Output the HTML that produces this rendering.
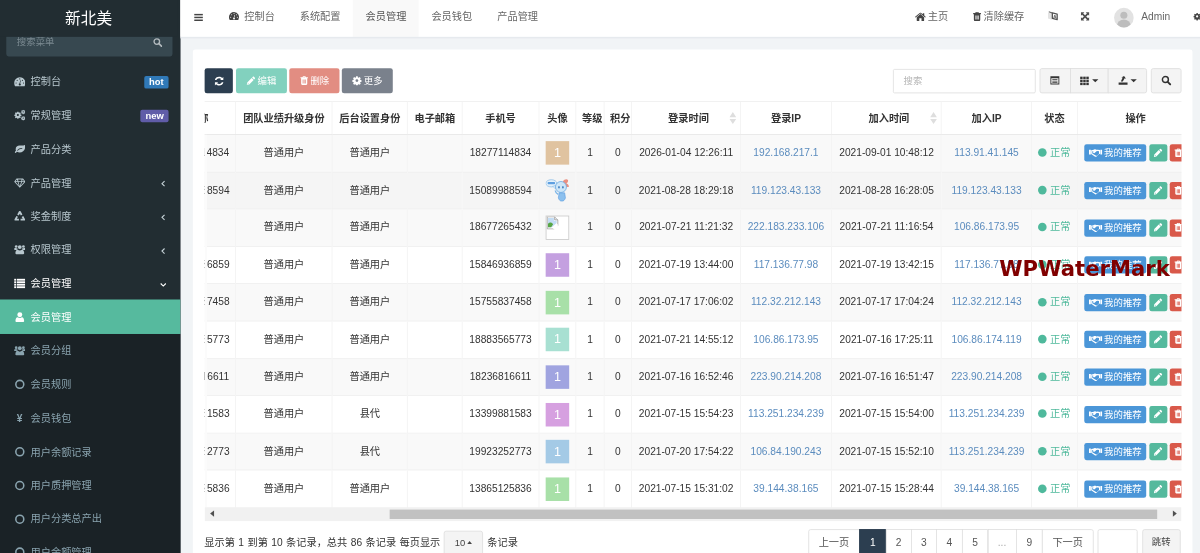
<!DOCTYPE html><html lang="zh-CN"><head><meta charset="utf-8"><title>新北美</title><style>
*{box-sizing:border-box}
html,body{margin:0;padding:0}
body{width:1200px;height:553px;overflow:hidden;background:#f1f4f6;font-family:"Liberation Sans","Noto Sans CJK SC",sans-serif;font-size:13px;color:#333;line-height:1.42857}
#app{position:absolute;left:0;top:0;width:1540px;height:710px;transform:scale(0.784);transform-origin:0 0;overflow:hidden;background:#f1f4f6}
#bw{position:absolute;left:-30px;top:-30px;width:1600px;height:780px;filter:blur(.45px);background:#f1f4f6}
#in{position:absolute;left:30px;top:30px;width:1540px;height:740px}
.fill{position:absolute}
.ic{fill:currentColor;display:inline-block;vertical-align:middle}
.abs{position:absolute}
/* sidebar */
#side{position:absolute;left:0;top:0;width:230.300px;height:710px;background:#222d32;color:#b8c7ce}
#logo{position:absolute;left:0;top:0;width:226px;height:46.5px;background:#222d32;color:#fff;font-size:20px;text-align:center;line-height:46px;z-index:3}
#sform{position:absolute;left:8px;top:36px;width:212px;height:36px;background:#374850;border-radius:3px;z-index:1}
#sform span{position:absolute;left:13.5px;top:9px;font-size:12px;color:#7b8a91;line-height:17px}
#sform .ic{position:absolute;left:186.5px;top:11.5px;color:#b2b9bd}
.mi{position:absolute;left:0;width:230.300px;height:43.100px;line-height:42.89px;font-size:13px;color:#b8c7ce;white-space:nowrap}
.mi .ico{position:absolute;left:15px;top:.800px;width:20px;height:42.85px;text-align:center;color:inherit}
.mi .ico .ic{position:relative;top:-1px}
.mi .tx{position:absolute;left:39px;top:1px}
.mi .arr{position:absolute;left:202.500px;top:1.500px;color:#c5d1d6}
.mi.open{color:#fff}
.mi.sub{color:#8aa4af}
.mi.act{color:#fff}
#actbg{position:absolute;left:-30px;top:382.200px;width:260.300px;height:43.600px;background:#56ba9e}
#subbg{position:absolute;left:-30px;top:425.500px;width:260.300px;height:300px;background:#1a2226}
.lbl{position:absolute;top:14px;height:16.600px;line-height:16.600px;font-size:12px;font-weight:bold;color:#fff;border-radius:2.500px;text-align:center;font-family:"Liberation Sans",sans-serif}
/* header */
#hdr{position:absolute;left:230px;top:0;width:1310px;height:46.700px;background:#fff}
#hdrline{position:absolute;left:230px;top:46.700px;width:1310px;height:2.600px;background:#e6eaee}
.tab{position:absolute;top:0;height:46.700px;line-height:42px;font-size:13px;color:#666;white-space:nowrap}
.tab.on{background:#f9f9f9;color:#555}
.nv{position:absolute;top:0;height:46.700px;line-height:43px;font-size:13px;color:#666;white-space:nowrap}
/* panel */
#panel{position:absolute;left:245.700px;top:62.500px;width:1275.600px;height:660px;background:#fff;border-radius:3px}
.btn{position:absolute;top:87.300px;height:31.800px;border-radius:3px;color:#fff;font-size:12px;line-height:33.600px;text-align:center;white-space:nowrap}
.btn .ic{position:relative;top:-1px}
.gbtn{position:absolute;top:87.200px;height:32px;background:#f4f4f4;border:1px solid #ddd;color:#333;text-align:center;line-height:28px}
/* table */
#twrap{position:absolute;left:260.600px;top:129px;width:1246.200px;height:535.500px;overflow:hidden}
#tbl{position:absolute;left:-58.800px;top:0;border-collapse:collapse;table-layout:fixed;font-size:13px;color:#333}
#tbl th,#tbl td{border-left:1px solid #f1f1f1;border-right:1px solid #f1f1f1;border-top:1px solid #ededed;padding:0;text-align:center;vertical-align:middle;white-space:nowrap;overflow:hidden}
#tbl th{height:42px;padding-top:3px;font-weight:bold;color:#333;border-bottom:1px solid #e4e4e4;border-top:1px solid #e8e8e8;position:relative}
#tbl td{height:47.620px}
#tbl tr.o td{background:#f9f9f9}
#tbl tr.h td{background:#f5f5f5}
#tbl a{color:#5b8cbe;text-decoration:none}
.av{display:inline-block;width:30px;height:30px;line-height:30px;color:#fff;font-size:16px;vertical-align:middle;text-align:center}
.st{color:#4fb99c}
.st i{display:inline-block;width:11px;height:11px;border-radius:50%;background:#4fb99c;vertical-align:middle;margin-right:4px;position:relative;top:-1px}
.xb{display:inline-block;height:22px;line-height:23.400px;border-radius:3px;color:#fff;font-size:12px;vertical-align:middle;text-align:center}
.xb .ic{position:relative;top:-1px}
.srt{position:absolute;right:4.800px;top:11px;color:#dedede}
/* scroll */
#sb{position:absolute;left:0;top:518px;width:1246.200px;height:17.500px;background:#f1f1f1}
#sb .th{position:absolute;left:236.100px;top:2.800px;width:979.400px;height:12px;background:#c1c1c1}
/* pagination */
.pg{position:absolute;top:674.700px;height:34px;border:1px solid #ddd;background:#fff;color:#555;font-size:13px;line-height:31px;text-align:center;margin-left:-1px}
.pg.on{background:#2c3e50;border-color:#2c3e50;color:#fff}
#info{position:absolute;left:260.600px;top:677.200px;font-size:13px;color:#333;line-height:29px;white-space:nowrap;word-spacing:.8px}
</style></head><body><div id="app"><div id="bw"><div class="fill" style="left:0;top:0;width:260.300px;height:780px;background:#222d32"></div><div class="fill" style="left:260.300px;top:0;width:1340px;height:76.700px;background:#fff"></div><div id="in">
<div id="side">
<div id="logo">新北美</div>
<div id="sform"><span>搜索菜单</span><svg class="ic" width="12" height="12" viewBox="0 0 16 16" style=""><circle cx="6.700" cy="6.700" r="4.700" fill="none" stroke="currentColor" stroke-width="2.300"/><path d="M10.300 10.300l4.200 4.200" stroke="currentColor" stroke-width="2.800" stroke-linecap="round"/></svg></div>
<div id="subbg"></div><div id="actbg"></div>
<div class="mi " style="top:82.90px"><span class="ico"><svg class="ic" width="14.5" height="14.5" viewBox="0 0 16 16" style=""><path fill-rule="evenodd" d="M8 1.800a8 8 0 0 0-8 8c0 1.600.500 3.100 1.300 4.400h13.400A8 8 0 0 0 8 1.800zM8 3.200a.800.800 0 1 1 0 1.600.800.800 0 0 1 0-1.600zM2.800 10.600a.800.800 0 1 1 0-1.600.800.800 0 0 1 0 1.600zM4.300 6.800a.800.800 0 1 1 0-1.600.800.800 0 0 1 0 1.600zM9.500 11.800a1.500 1.500 0 1 1-1.900-1.450l1.100-4.300.800.200-1.100 4.300c.600.200 1.100.700 1.100 1.250zM11.700 6.800a.800.800 0 1 1 0-1.600.800.800 0 0 1 0 1.600zM13.200 10.600a.800.800 0 1 1 0-1.600.800.800 0 0 1 0 1.600z"/></svg></span><span class="tx">控制台</span><span class="lbl" style="left:183.800px;width:31.200px;background:#3079b8">hot</span></div>
<div class="mi " style="top:125.79px"><span class="ico"><svg class="ic" width="14.5" height="14.5" viewBox="0 0 16 16" style=""><g transform="translate(0,2.500) scale(.66)"><path fill-rule="evenodd" d="M6.700 1h2.600l.4 1.900 1.200.5 1.600-1.100 1.800 1.800-1.100 1.600.5 1.200 1.900.4v2.600l-1.900.4-.5 1.200 1.100 1.600-1.800 1.800-1.600-1.100-1.200.5-.4 1.900H6.700l-.4-1.900-1.200-.5-1.600 1.100-1.800-1.800 1.100-1.600-.5-1.200L.4 9.900V7.300l1.900-.4.5-1.200-1.100-1.600 1.800-1.800 1.600 1.100 1.200-.5zM8 5.700a2.300 2.300 0 1 0 0 4.600 2.300 2.300 0 0 0 0-4.600z" transform="translate(0,-.6)"/></g><g transform="translate(9.600,0) scale(.4)"><path fill-rule="evenodd" d="M6.700 1h2.600l.4 1.900 1.200.5 1.600-1.100 1.800 1.800-1.100 1.600.5 1.200 1.900.4v2.600l-1.900.4-.5 1.200 1.100 1.600-1.800 1.800-1.600-1.100-1.200.5-.4 1.900H6.700l-.4-1.900-1.200-.5-1.600 1.100-1.800-1.800 1.100-1.600-.5-1.200L.4 9.900V7.300l1.900-.4.5-1.200-1.100-1.600 1.800-1.800 1.600 1.100 1.200-.5zM8 5.700a2.300 2.300 0 1 0 0 4.600 2.300 2.300 0 0 0 0-4.600z" transform="translate(0,-.6)"/></g><g transform="translate(9.600,8.800) scale(.4)"><path fill-rule="evenodd" d="M6.700 1h2.600l.4 1.900 1.200.5 1.600-1.100 1.800 1.800-1.100 1.600.5 1.200 1.900.4v2.600l-1.900.4-.5 1.200 1.100 1.600-1.800 1.800-1.600-1.100-1.200.5-.4 1.900H6.700l-.4-1.900-1.200-.5-1.600 1.100-1.800-1.800 1.100-1.600-.5-1.200L.4 9.900V7.300l1.900-.4.5-1.200-1.100-1.600 1.800-1.800 1.600 1.100 1.200-.5zM8 5.700a2.300 2.300 0 1 0 0 4.600 2.300 2.300 0 0 0 0-4.600z" transform="translate(0,-.6)"/></g></svg></span><span class="tx">常规管理</span><span class="lbl" style="left:179.300px;width:35.700px;background:#605ca8">new</span></div>
<div class="mi " style="top:168.68px"><span class="ico"><svg class="ic" width="14.5" height="14.5" viewBox="0 0 16 16" style=""><path d="M15.300 2.200c.5 1.300.5 3 .1 4.600-.9 3.500-3.800 6-7.600 6-1.400 0-2.700-.4-3.700-1-.7.600-1.300 1.500-2 1.500-.6 0-1.100-.6-1.100-1.100 0-.8 1-1.400 1.600-2.100-.3-.7-.4-1.400-.4-2.100 0-3 2.400-4.800 5.400-5 2.200-.2 5.500.3 7.700-.8zM11 6.300c-2.800 0-4.900 1.200-6.600 3.200-.3.400.4 1 .8.600C6.800 8.400 8.600 7.400 11 7.400c.700 0 .700-1.100 0-1.100z"/></svg></span><span class="tx">产品分类</span></div>
<div class="mi " style="top:211.57px"><span class="ico"><svg class="ic" width="14.5" height="14.5" viewBox="0 0 16 16" style=""><path fill-rule="evenodd" d="M3.400 2h9.200L16 6.400 8 15 0 6.400zM3.900 3.200 2 5.700h2.800zm1.700 0L6 5.700h4l.4-2.500zm6.500 0-.9 2.500H14zM2.100 6.900l4.700 5.200L4.900 6.900zm4.100 0L8 12.600l1.800-5.700zm4.900 0L9.200 12.100l4.700-5.200z"/></svg></span><span class="tx">产品管理</span><span class="arr"><svg class="ic" width="10.5" height="10.5" viewBox="0 0 16 16" style=""><path d="M10.500 3 5.500 8l5 5" fill="none" stroke="currentColor" stroke-width="2.200"/></svg></span></div>
<div class="mi " style="top:254.46px"><span class="ico"><svg class="ic" width="14.5" height="14.5" viewBox="0 0 16 16" style=""><path d="M8 1.300 14.300 12.300H1.700z" fill="none" stroke="currentColor" stroke-width="2.600" stroke-linejoin="round" stroke-dasharray="10.400 2.300" stroke-dashoffset="5.200"/></svg></span><span class="tx">奖金制度</span><span class="arr"><svg class="ic" width="10.5" height="10.5" viewBox="0 0 16 16" style=""><path d="M10.500 3 5.500 8l5 5" fill="none" stroke="currentColor" stroke-width="2.200"/></svg></span></div>
<div class="mi " style="top:297.35px"><span class="ico"><svg class="ic" width="14.5" height="14.5" viewBox="0 0 16 16" style=""><circle cx="8" cy="4.600" r="2.700"/><path d="M3 14.500c-.8 0-1.200-.5-1.200-1.200 0-2.600 1-5 3.300-5 .8.700 1.800 1.100 2.900 1.100s2.100-.4 2.900-1.100c2.300 0 3.300 2.400 3.300 5 0 .7-.4 1.200-1.200 1.200z"/><circle cx="2.900" cy="3.800" r="1.900"/><circle cx="13.100" cy="3.800" r="1.900"/><path d="M.9 8.600C.3 8.600 0 8.200 0 7.700c0-1 .4-2.100 1.400-2.100.4.400 1 .6 1.500.6.500 0 1-.1 1.400-.4.100.8.400 1.500.9 2.100-.9 0-1.600.3-2.100.7zM15.100 8.600c.6 0 .9-.4.900-.9 0-1-.4-2.100-1.400-2.100-.4.400-1 .6-1.500.6-.5 0-1-.1-1.400-.4-.1.800-.4 1.500-.9 2.100.9 0 1.600.3 2.100.7z"/></svg></span><span class="tx">权限管理</span><span class="arr"><svg class="ic" width="10.5" height="10.5" viewBox="0 0 16 16" style=""><path d="M10.500 3 5.500 8l5 5" fill="none" stroke="currentColor" stroke-width="2.200"/></svg></span></div>
<div class="mi open" style="top:340.24px"><span class="ico"><svg class="ic" width="14.5" height="14.5" viewBox="0 0 16 16" style=""><rect x="0" y="1.800" width="3" height="2.600"/><rect x="4" y="1.800" width="12" height="2.600"/><rect x="0" y="5.300" width="3" height="2.600"/><rect x="4" y="5.300" width="12" height="2.600"/><rect x="0" y="8.800" width="3" height="2.600"/><rect x="4" y="8.800" width="12" height="2.600"/><rect x="0" y="12.300" width="3" height="2.600"/><rect x="4" y="12.300" width="12" height="2.600"/></svg></span><span class="tx">会员管理</span><span class="arr" style="color:#fff"><svg class="ic" width="10.5" height="10.5" viewBox="0 0 16 16" style=""><path d="M3 5.500l5 5 5-5" fill="none" stroke="currentColor" stroke-width="2.200"/></svg></span></div>
<div class="mi act sub" style="top:383.13px"><span class="ico"><svg class="ic" width="14.5" height="14.5" viewBox="0 0 16 16" style=""><circle cx="8" cy="4.800" r="3.500"/><path d="M3.600 15.200c-1 0-1.700-.6-1.700-1.600 0-2.600.8-5.300 3.200-5.300.8.700 1.800 1.200 2.900 1.200s2.100-.5 2.900-1.200c2.400 0 3.200 2.700 3.200 5.300 0 1-.7 1.600-1.700 1.600z"/></svg></span><span class="tx">会员管理</span></div>
<div class="mi sub" style="top:426.02px"><span class="ico"><svg class="ic" width="14.5" height="14.5" viewBox="0 0 16 16" style=""><circle cx="8" cy="4.600" r="2.700"/><path d="M3 14.500c-.8 0-1.200-.5-1.200-1.200 0-2.600 1-5 3.300-5 .8.700 1.800 1.100 2.900 1.100s2.100-.4 2.900-1.100c2.300 0 3.300 2.400 3.300 5 0 .7-.4 1.200-1.200 1.200z"/><circle cx="2.900" cy="3.800" r="1.900"/><circle cx="13.100" cy="3.800" r="1.900"/><path d="M.9 8.600C.3 8.600 0 8.200 0 7.700c0-1 .4-2.100 1.400-2.100.4.400 1 .6 1.500.6.500 0 1-.1 1.400-.4.100.8.400 1.500.9 2.100-.9 0-1.600.3-2.100.7zM15.100 8.600c.6 0 .9-.4.900-.9 0-1-.4-2.100-1.400-2.100-.4.400-1 .6-1.500.6-.5 0-1-.1-1.400-.4-.1.800-.4 1.500-.9 2.100.9 0 1.600.3 2.100.7z"/></svg></span><span class="tx">会员分组</span></div>
<div class="mi sub" style="top:468.91px"><span class="ico"><svg class="ic" width="14.5" height="14.5" viewBox="0 0 16 16" style=""><circle cx="8" cy="8" r="5.600" fill="none" stroke="currentColor" stroke-width="2.200"/></svg></span><span class="tx">会员规则</span></div>
<div class="mi sub" style="top:511.80px"><span class="ico"><span style="font-size:13px;font-weight:bold">¥</span></span><span class="tx">会员钱包</span></div>
<div class="mi sub" style="top:554.69px"><span class="ico"><svg class="ic" width="14.5" height="14.5" viewBox="0 0 16 16" style=""><circle cx="8" cy="8" r="5.600" fill="none" stroke="currentColor" stroke-width="2.200"/></svg></span><span class="tx">用户余额记录</span></div>
<div class="mi sub" style="top:597.58px"><span class="ico"><svg class="ic" width="14.5" height="14.5" viewBox="0 0 16 16" style=""><circle cx="8" cy="8" r="5.600" fill="none" stroke="currentColor" stroke-width="2.200"/></svg></span><span class="tx">用户质押管理</span></div>
<div class="mi sub" style="top:640.47px"><span class="ico"><svg class="ic" width="14.5" height="14.5" viewBox="0 0 16 16" style=""><circle cx="8" cy="8" r="5.600" fill="none" stroke="currentColor" stroke-width="2.200"/></svg></span><span class="tx">用户分类总产出</span></div>
<div class="mi sub" style="top:683.36px"><span class="ico"><svg class="ic" width="14.5" height="14.5" viewBox="0 0 16 16" style=""><circle cx="8" cy="8" r="5.600" fill="none" stroke="currentColor" stroke-width="2.200"/></svg></span><span class="tx">用户余额管理</span></div>
</div>
<div id="hdr">
<span class="nv" style="left:16.600px;color:#444"><svg class="ic" width="12.5" height="12.5" viewBox="0 0 16 16" style=""><rect x="1" y="2.2" width="14" height="2.4"/><rect x="1" y="6.8" width="14" height="2.4"/><rect x="1" y="11.4" width="14" height="2.4"/></svg></span>
<div class="tab" style="left:46.1px;width:90.2px;padding-left:16px"><svg class="ic" width="13" height="13" viewBox="0 0 16 16" style="position:relative;top:-1px;margin-right:6.500px;color:#444"><path fill-rule="evenodd" d="M8 1.800a8 8 0 0 0-8 8c0 1.600.500 3.100 1.300 4.400h13.400A8 8 0 0 0 8 1.800zM8 3.200a.800.800 0 1 1 0 1.600.800.800 0 0 1 0-1.600zM2.800 10.600a.800.800 0 1 1 0-1.600.800.800 0 0 1 0 1.600zM4.300 6.800a.800.800 0 1 1 0-1.600.800.800 0 0 1 0 1.600zM9.500 11.800a1.500 1.500 0 1 1-1.900-1.450l1.100-4.300.800.200-1.100 4.300c.600.200 1.100.700 1.100 1.250zM11.700 6.800a.800.800 0 1 1 0-1.600.800.800 0 0 1 0 1.600zM13.200 10.600a.800.800 0 1 1 0-1.600.800.800 0 0 1 0 1.600z"/></svg>控制台</div>
<div class="tab" style="left:136.3px;width:84.0px;padding-left:16px">系统配置</div>
<div class="tab on" style="left:220.3px;width:84.0px;padding-left:16px">会员管理</div>
<div class="tab" style="left:304.3px;width:84.0px;padding-left:16px">会员钱包</div>
<div class="tab" style="left:388.3px;width:84.0px;padding-left:16px">产品管理</div>
<span class="nv" style="left:936.5px"><svg class="ic" width="14" height="14" viewBox="0 0 16 16" style="position:relative;top:-1px;margin-right:3px;color:#444"><path d="M8 3.400 2.600 7.900v4.900c0 .3.200.5.500.5h3.300V9.600h3.200v3.700h3.300c.3 0 .5-.2.500-.5V7.900z"/><path d="M15.700 7.300 13.600 5.500V2.300c0-.2-.1-.3-.3-.3h-1.500c-.2 0-.3.100-.3.300v1.500L9 1.700c-.6-.5-1.400-.5-2 0L.3 7.300c-.1.100-.2.300 0 .4l.5.600c.1.100.3.100.4 0L8 2.700l6.800 5.600c.1.100.3.100.4 0l.5-.6c.2-.1.100-.3 0-.4z"/></svg>主页</span>
<span class="nv" style="left:1009.5px"><svg class="ic" width="12.5" height="12.5" viewBox="0 0 16 16" style="position:relative;top:-1px;margin-right:2.500px;color:#444"><path d="M5.500 1.200c.2-.5.500-.7 1-.7h3c.5 0 .8.200 1 .7l.4 1h3c.3 0 .5.200.5.500v.7c0 .3-.2.500-.5.500h-.7v9.300c0 1.200-.7 2-1.700 2H4.500c-1 0-1.700-.8-1.700-2V3.900h-.7c-.3 0-.5-.2-.5-.5v-.7c0-.3.200-.5.500-.5h3zM6.700 1.700l-.3.500h3.200l-.3-.5zM5.400 6v6.500h1.200V6zm2 0v6.500h1.200V6zm2 0v6.500h1.200V6z" fill-rule="evenodd"/></svg>清除缓存</span>
<span class="nv" style="left:1106.0px;color:#999"><svg class="ic" width="14" height="14" viewBox="0 0 16 16" style="position:relative;top:-2.200px"><path d="M.800 4.200 6.800 2.200v11.600L.800 12z" fill="#e3e3e3"/><path d="M2 2.300l5.200 1.700" stroke="#666" stroke-width="1.500" fill="none"/><path d="M7.200 4 14.200 5.600v8.200L7.200 11.800z" fill="#fff" stroke="#555" stroke-width="1.900" stroke-linejoin="round"/><path d="M9.200 11.300l1.600-4.300 1.700 4.800M9.800 9.900l2.300.500" stroke="#555" fill="none" stroke-width="1.100"/></svg></span>
<span class="nv" style="left:1148.0px;color:#505050"><svg class="ic" width="12" height="12" viewBox="0 0 16 16" style="position:relative;top:-1.800px"><path d="M1 1h5.800L4.900 2.900 8 6l3.100-3.100L9.200 1H15v5.800l-1.900-1.900L10 8l3.100 3.100L15 9.200V15H9.200l1.900-1.900L8 10l-3.100 3.100L6.800 15H1V9.200l1.900 1.900L6 8 2.900 4.900 1 6.800z"/></svg></span>
<span class="abs" style="left:1190.7px;top:9.500px;width:25.500px;height:25.500px;border-radius:50%;background:#e2e2e2;overflow:hidden"><i class="abs" style="left:8.200px;top:5px;width:9px;height:9px;border-radius:50%;background:#bdbdbd"></i><i class="abs" style="left:4.200px;top:15.500px;width:17px;height:14px;border-radius:50%;background:#bdbdbd"></i></span>
<span class="nv" style="left:1225.7px">Admin</span>
<span class="nv" style="left:1291.5px;color:#444"><svg class="ic" width="15" height="15" viewBox="0 0 16 16" style="position:relative;top:-1px"><g transform="translate(0,2.500) scale(.66)"><path fill-rule="evenodd" d="M6.700 1h2.600l.4 1.900 1.200.5 1.600-1.100 1.800 1.800-1.100 1.600.5 1.200 1.900.4v2.600l-1.900.4-.5 1.200 1.100 1.600-1.800 1.800-1.600-1.100-1.200.5-.4 1.900H6.700l-.4-1.900-1.200-.5-1.600 1.100-1.800-1.800 1.100-1.600-.5-1.200L.4 9.900V7.300l1.900-.4.5-1.200-1.100-1.600 1.800-1.800 1.600 1.100 1.200-.5zM8 5.700a2.300 2.300 0 1 0 0 4.600 2.300 2.300 0 0 0 0-4.600z" transform="translate(0,-.6)"/></g><g transform="translate(9.600,0) scale(.4)"><path fill-rule="evenodd" d="M6.700 1h2.600l.4 1.900 1.200.5 1.600-1.100 1.800 1.800-1.100 1.600.5 1.200 1.900.4v2.600l-1.900.4-.5 1.200 1.100 1.600-1.800 1.800-1.600-1.100-1.200.5-.4 1.900H6.700l-.4-1.900-1.200-.5-1.600 1.100-1.800-1.800 1.100-1.600-.5-1.200L.4 9.900V7.300l1.900-.4.5-1.200-1.100-1.600 1.800-1.800 1.600 1.100 1.200-.5zM8 5.700a2.300 2.300 0 1 0 0 4.600 2.300 2.300 0 0 0 0-4.600z" transform="translate(0,-.6)"/></g><g transform="translate(9.600,8.800) scale(.4)"><path fill-rule="evenodd" d="M6.700 1h2.600l.4 1.900 1.200.5 1.600-1.100 1.800 1.800-1.100 1.600.5 1.200 1.900.4v2.600l-1.900.4-.5 1.200 1.100 1.600-1.800 1.800-1.600-1.100-1.200.5-.4 1.900H6.700l-.4-1.900-1.200-.5-1.600 1.100-1.800-1.800 1.100-1.600-.5-1.200L.4 9.900V7.300l1.900-.4.5-1.200-1.100-1.600 1.800-1.800 1.600 1.100 1.200-.5zM8 5.700a2.300 2.300 0 1 0 0 4.600 2.300 2.300 0 0 0 0-4.600z" transform="translate(0,-.6)"/></g></svg></span>
</div><div id="hdrline"></div>
<div id="panel"></div>
<div class="btn" style="left:261.200px;width:36px;background:#2c3e50"><svg class="ic" width="13" height="13" viewBox="0 0 16 16" style=""><path d="M14.600 1.300v4.600c0 .3-.2.500-.5.500H9.500l1.700-1.700A4.500 4.500 0 0 0 8 3.400c-1.900 0-3.500 1.100-4.200 2.800H1.300A6.900 6.900 0 0 1 8 1c1.900 0 3.600.8 4.900 2zM1.400 14.700v-4.600c0-.3.200-.5.500-.5h4.600l-1.700 1.700c.8.800 2 1.300 3.200 1.300 1.900 0 3.500-1.100 4.200-2.800h2.500A6.900 6.900 0 0 1 8 15c-1.900 0-3.600-.8-4.900-2z"/></svg></div>
<div class="btn" style="left:301px;width:64.600px;background:#82d1be"><svg class="ic" width="12" height="12" viewBox="0 0 16 16" style="margin-right:2.500px"><path d="M11.400 1.200c.5-.5 1.200-.5 1.700 0l1.700 1.700c.5.500.5 1.200 0 1.700l-1.300 1.300-3.400-3.400zM9.300 3.300l3.400 3.400-7.500 7.500-4.200.8.800-4.200zM3 11.500l-.3 1.800 1.800-.3z"/></svg>编辑</div>
<div class="btn" style="left:369px;width:63.800px;background:#e28d82"><svg class="ic" width="12" height="12" viewBox="0 0 16 16" style="margin-right:2px"><path d="M5.500 1.200c.2-.5.500-.7 1-.7h3c.5 0 .8.200 1 .7l.4 1h3c.3 0 .5.200.5.500v.7c0 .3-.2.500-.5.500h-.7v9.300c0 1.200-.7 2-1.700 2H4.500c-1 0-1.700-.8-1.700-2V3.900h-.7c-.3 0-.5-.2-.5-.5v-.7c0-.3.200-.5.500-.5h3zM6.700 1.700l-.3.500h3.200l-.3-.5zM5.400 6v6.500h1.200V6zm2 0v6.500h1.200V6zm2 0v6.500h1.200V6z" fill-rule="evenodd"/></svg>删除</div>
<div class="btn" style="left:436.200px;width:64.800px;background:#7a818c"><svg class="ic" width="12.5" height="12.5" viewBox="0 0 16 16" style="margin-right:2.500px"><path fill-rule="evenodd" d="M6.700 1h2.600l.4 1.900 1.200.5 1.600-1.100 1.800 1.800-1.100 1.600.5 1.200 1.900.4v2.600l-1.900.4-.5 1.200 1.100 1.600-1.800 1.800-1.600-1.100-1.200.5-.4 1.900H6.700l-.4-1.900-1.200-.5-1.600 1.100-1.800-1.800 1.100-1.600-.5-1.200L.4 9.900V7.300l1.900-.4.5-1.200-1.100-1.600 1.800-1.800 1.600 1.100 1.200-.5zM8 5.700a2.300 2.300 0 1 0 0 4.600 2.300 2.300 0 0 0 0-4.600z" transform="translate(0,-.6)"/></svg>更多</div>
<div class="abs" style="left:1139.400px;top:87.500px;width:181.400px;height:31.500px;border:1px solid #ddd;border-radius:2px;background:#fff;font-size:12px;color:#b5b5b5;line-height:29px;padding-left:12px">搜索</div>
<div class="gbtn" style="left:1325.900px;width:39.800px;border-radius:3px 0 0 3px"><svg class="ic" width="13" height="13" viewBox="0 0 16 16" style=""><path fill-rule="evenodd" d="M1 1.500h14v13H1zM2.400 4.800v8.300h11.200V4.800zM4 6.200h8v1.200H4zm0 2.300h8v1.200H4zm0 2.300h8V12H4z"/></svg></div>
<div class="gbtn" style="left:1364.700px;width:49.600px;"><svg class="ic" width="12.5" height="12.5" viewBox="0 0 16 16" style=""><rect x="1" y="1" width="4" height="4"/><rect x="6" y="1" width="4" height="4"/><rect x="11" y="1" width="4" height="4"/><rect x="1" y="6" width="4" height="4"/><rect x="6" y="6" width="4" height="4"/><rect x="11" y="6" width="4" height="4"/><rect x="1" y="11" width="4" height="4"/><rect x="6" y="11" width="4" height="4"/><rect x="11" y="11" width="4" height="4"/></svg><span style="display:inline-block;border:4px solid transparent;border-top:4.500px solid #333;border-bottom:0;margin-left:3.500px;vertical-align:middle"></span></div>
<div class="gbtn" style="left:1413.300px;width:49.300px;border-radius:0 3px 3px 0"><svg class="ic" width="13" height="13" viewBox="0 0 16 16" style=""><path d="M1 11.500h14V15H1zM4.500 9.800l2.900-6.100H5.200L9.500 1l3.200 4.500-2.200-.9-3 5.200z"/></svg><span style="display:inline-block;border:4px solid transparent;border-top:4.500px solid #333;border-bottom:0;margin-left:3.500px;vertical-align:middle"></span></div>
<div class="gbtn" style="left:1468.400px;width:38.400px;border-radius:3px"><svg class="ic" width="13" height="13" viewBox="0 0 16 16" style=""><circle cx="6.700" cy="6.700" r="4.700" fill="none" stroke="currentColor" stroke-width="2.300"/><path d="M10.300 10.300l4.200 4.200" stroke="currentColor" stroke-width="2.800" stroke-linecap="round"/></svg></div>
<div id="twrap"><table id="tbl" style="width:1320.4px"><colgroup>
<col style="width:98.5px">
<col style="width:122.7px">
<col style="width:96.5px">
<col style="width:69.3px">
<col style="width:98.2px">
<col style="width:47.3px">
<col style="width:35.5px">
<col style="width:35.7px">
<col style="width:138.4px">
<col style="width:116.3px">
<col style="width:140.3px">
<col style="width:114.9px">
<col style="width:58.6px">
<col style="width:148.2px">
</colgroup><thead><tr>
<th style="padding-left:2.500px">昵称</th>
<th>团队业绩升级身份</th>
<th>后台设置身份</th>
<th>电子邮箱</th>
<th>手机号</th>
<th>头像</th>
<th style="padding-left:6px">等级</th>
<th style="padding-left:6px">积分</th>
<th style="padding-left:6px">登录时间<span class="srt"><svg class="ic" width="9.5" height="17.1" viewBox="0 0 10 18" style=""><path d="M5 1l4.500 6.800h-9zM5 17l4.500-6.800h-9z"/></svg></span></th>
<th>登录IP</th>
<th style="padding-left:6px">加入时间<span class="srt"><svg class="ic" width="9.5" height="17.1" viewBox="0 0 10 18" style=""><path d="M5 1l4.500 6.800h-9zM5 17l4.500-6.800h-9z"/></svg></span></th>
<th>加入IP</th>
<th>状态</th>
<th>操作</th>
</tr></thead><tbody>
<tr class="o"><td style="padding-left:3px">18277114834</td><td>普通用户</td><td>普通用户</td><td></td><td>18277114834</td><td><span class="av" style="background:#e0c3a0">1</span></td><td>1</td><td>0</td><td>2026-01-04 12:26:11</td><td><a>192.168.217.1</a></td><td>2021-09-01 10:48:12</td><td><a>113.91.41.145</a></td><td style="padding-right:.800px"><span class="st"><i></i>正常</span></td><td style="text-align:left;padding-left:8px"><span class="xb" style="width:79.200px;background:#4b96d8"><svg class="ic" width="17" height="13.6" viewBox="0 0 20 16" style="margin-right:2.500px"><path fill-rule="evenodd" d="M0 3.500h2.800v7H0zM17.200 3.500H20v7h-2.800zM3.300 4.200l2.600-.1 2-.9c.700-.3 1.500-.3 2.200 0l.9.400 2-.2 3.700.700v5.600l-1.500.3-3.800 3.600c-.800.700-1.900.700-2.700 0L3.300 9.900zM5 5.700v3.500l5.700 3.300c.400.300.900.300 1.300 0l3-3 .100-3.600-2.200-.4-1.700.2-2.300 2.400c-.700.700-1.800.700-2.400 0-.600-.600-.600-1.500 0-2.100l.300-.300z"/></svg>我的推荐</span><span class="xb" style="width:22.500px;background:#55b99d;margin-left:4px"><svg class="ic" width="12" height="12" viewBox="0 0 16 16" style=""><path d="M11.400 1.200c.5-.5 1.200-.5 1.700 0l1.700 1.700c.5.500.5 1.200 0 1.700l-1.300 1.300-3.400-3.400zM9.300 3.300l3.400 3.400-7.500 7.500-4.200.8.800-4.200zM3 11.500l-.3 1.800 1.800-.3z"/></svg></span><span class="xb" style="width:22.500px;background:#d9594a;margin-left:3px"><svg class="ic" width="12" height="12" viewBox="0 0 16 16" style=""><path d="M5.500 1.200c.2-.5.500-.7 1-.7h3c.5 0 .8.200 1 .7l.4 1h3c.3 0 .5.200.5.500v.7c0 .3-.2.500-.5.500h-.7v9.300c0 1.200-.7 2-1.700 2H4.500c-1 0-1.700-.8-1.700-2V3.900h-.7c-.3 0-.5-.2-.5-.5v-.7c0-.3.200-.5.500-.5h3zM6.700 1.700l-.3.500h3.200l-.3-.5zM5.400 6v6.500h1.200V6zm2 0v6.500h1.200V6zm2 0v6.500h1.200V6z" fill-rule="evenodd"/></svg></span></td></tr>
<tr class="h"><td style="padding-left:3px">15089988594</td><td>普通用户</td><td>普通用户</td><td></td><td>15089988594</td><td><svg width="30" height="30" viewBox="0 0 30 30" style="vertical-align:middle"><ellipse cx="7.200" cy="5.800" rx="7" ry="4.600" fill="#e4f1fb" stroke="#86bbe6" stroke-width=".9"/><path d="M9 9.500l3.500 3.500 1-4z" fill="#e4f1fb" stroke="#86bbe6" stroke-width=".7"/><rect x="2.500" y="4.300" width="9.500" height="2.600" rx="1" fill="#5d9fe0"/><path d="M22 3.500c1.500-3 5-3.500 6.500-2 .5 2-.5 3.500-2 4.500 2 .5 3.500 2 3 4.500-2.500.5-4.500-1-5.500-3z" fill="#ea8f80"/><circle cx="19.500" cy="10.500" r="7" fill="#cde6f8" stroke="#6aa9e2" stroke-width="1"/><ellipse cx="17" cy="10.800" rx="1" ry="1.500" fill="#3f7fc0"/><ellipse cx="22" cy="10.800" rx="1" ry="1.500" fill="#3f7fc0"/><path d="M16 20c-2-1-3.500-3-3.800-5" fill="none" stroke="#7ab5e8" stroke-width="1.800"/><path d="M17.200 18h7l1 6.500c-1 2.500-2 4-4.500 4s-3.500-1.500-4.500-4z" fill="#8cc0ee" stroke="#5d9fe0" stroke-width=".8"/></svg></td><td>1</td><td>0</td><td>2021-08-28 18:29:18</td><td><a>119.123.43.133</a></td><td>2021-08-28 16:28:05</td><td><a>119.123.43.133</a></td><td style="padding-right:.800px"><span class="st"><i></i>正常</span></td><td style="text-align:left;padding-left:8px"><span class="xb" style="width:79.200px;background:#4b96d8"><svg class="ic" width="17" height="13.6" viewBox="0 0 20 16" style="margin-right:2.500px"><path fill-rule="evenodd" d="M0 3.500h2.800v7H0zM17.200 3.500H20v7h-2.800zM3.300 4.200l2.600-.1 2-.9c.700-.3 1.500-.3 2.200 0l.9.400 2-.2 3.700.700v5.600l-1.500.3-3.800 3.600c-.800.700-1.900.700-2.700 0L3.300 9.900zM5 5.700v3.500l5.700 3.300c.400.300.900.300 1.300 0l3-3 .100-3.600-2.200-.4-1.700.2-2.300 2.400c-.700.700-1.800.700-2.400 0-.600-.600-.600-1.500 0-2.100l.300-.300z"/></svg>我的推荐</span><span class="xb" style="width:22.500px;background:#55b99d;margin-left:4px"><svg class="ic" width="12" height="12" viewBox="0 0 16 16" style=""><path d="M11.400 1.200c.5-.5 1.200-.5 1.700 0l1.700 1.700c.5.500.5 1.200 0 1.700l-1.300 1.300-3.400-3.400zM9.300 3.300l3.400 3.400-7.500 7.500-4.200.8.800-4.200zM3 11.500l-.3 1.800 1.800-.3z"/></svg></span><span class="xb" style="width:22.500px;background:#d9594a;margin-left:3px"><svg class="ic" width="12" height="12" viewBox="0 0 16 16" style=""><path d="M5.500 1.200c.2-.5.500-.7 1-.7h3c.5 0 .8.200 1 .7l.4 1h3c.3 0 .5.200.5.500v.7c0 .3-.2.500-.5.500h-.7v9.300c0 1.200-.7 2-1.700 2H4.500c-1 0-1.700-.8-1.700-2V3.900h-.7c-.3 0-.5-.2-.5-.5v-.7c0-.3.200-.5.500-.5h3zM6.700 1.700l-.3.500h3.200l-.3-.5zM5.400 6v6.500h1.200V6zm2 0v6.500h1.200V6zm2 0v6.500h1.200V6z" fill-rule="evenodd"/></svg></span></td></tr>
<tr class="o"><td style="padding-left:3px"></td><td>普通用户</td><td>普通用户</td><td></td><td>18677265432</td><td><span style="display:inline-block;width:30px;height:31px;border:1px solid #c6c6c6;vertical-align:middle;position:relative;background:#fff"><svg width="16" height="17" viewBox="0 0 16 17" style="position:absolute;left:.300px;top:.300px"><path d="M1 .5h9.500l4 4v7l-4.500 4.500H1z" fill="#fff" stroke="#9a9a9a" stroke-width="1"/><path d="M10.500.5v4h4" fill="#e8e8e8" stroke="#9a9a9a" stroke-width="1"/><path d="M2 2h7.500v3.500H13v3L7 14H2z" fill="#c4ddf5"/><path d="M2 14V9.500c2-2.500 4.500-2.500 6.500.500L6 14z" fill="#58a646"/><path d="M14.500 9.500 8 16h6.500z" fill="#fff"/></svg></span></td><td>1</td><td>0</td><td>2021-07-21 11:21:32</td><td><a>222.183.233.106</a></td><td>2021-07-21 11:16:54</td><td><a>106.86.173.95</a></td><td style="padding-right:.800px"><span class="st"><i></i>正常</span></td><td style="text-align:left;padding-left:8px"><span class="xb" style="width:79.200px;background:#4b96d8"><svg class="ic" width="17" height="13.6" viewBox="0 0 20 16" style="margin-right:2.500px"><path fill-rule="evenodd" d="M0 3.500h2.800v7H0zM17.200 3.500H20v7h-2.800zM3.300 4.200l2.600-.1 2-.9c.700-.3 1.500-.3 2.200 0l.9.400 2-.2 3.700.700v5.600l-1.500.3-3.800 3.600c-.800.700-1.900.700-2.700 0L3.300 9.900zM5 5.700v3.500l5.700 3.300c.400.300.900.300 1.300 0l3-3 .100-3.600-2.200-.4-1.700.2-2.300 2.400c-.700.700-1.800.700-2.400 0-.600-.600-.600-1.500 0-2.100l.300-.300z"/></svg>我的推荐</span><span class="xb" style="width:22.500px;background:#55b99d;margin-left:4px"><svg class="ic" width="12" height="12" viewBox="0 0 16 16" style=""><path d="M11.400 1.200c.5-.5 1.200-.5 1.700 0l1.700 1.700c.5.500.5 1.200 0 1.700l-1.300 1.300-3.400-3.400zM9.300 3.300l3.400 3.400-7.500 7.500-4.200.8.800-4.200zM3 11.500l-.3 1.800 1.800-.3z"/></svg></span><span class="xb" style="width:22.500px;background:#d9594a;margin-left:3px"><svg class="ic" width="12" height="12" viewBox="0 0 16 16" style=""><path d="M5.500 1.200c.2-.5.500-.7 1-.7h3c.5 0 .8.200 1 .7l.4 1h3c.3 0 .5.200.5.500v.7c0 .3-.2.500-.5.500h-.7v9.300c0 1.200-.7 2-1.700 2H4.500c-1 0-1.700-.8-1.700-2V3.900h-.7c-.3 0-.5-.2-.5-.5v-.7c0-.3.200-.5.500-.5h3zM6.700 1.700l-.3.500h3.200l-.3-.5zM5.400 6v6.500h1.200V6zm2 0v6.500h1.200V6zm2 0v6.500h1.200V6z" fill-rule="evenodd"/></svg></span></td></tr>
<tr class=""><td style="padding-left:3px">15846936859</td><td>普通用户</td><td>普通用户</td><td></td><td>15846936859</td><td><span class="av" style="background:#c4a0e0">1</span></td><td>1</td><td>0</td><td>2021-07-19 13:44:00</td><td><a>117.136.77.98</a></td><td>2021-07-19 13:42:15</td><td><a>117.136.77.98</a></td><td style="padding-right:.800px"><span class="st"><i></i>正常</span></td><td style="text-align:left;padding-left:8px"><span class="xb" style="width:79.200px;background:#4b96d8"><svg class="ic" width="17" height="13.6" viewBox="0 0 20 16" style="margin-right:2.500px"><path fill-rule="evenodd" d="M0 3.500h2.800v7H0zM17.200 3.500H20v7h-2.800zM3.300 4.200l2.600-.1 2-.9c.700-.3 1.500-.3 2.200 0l.9.400 2-.2 3.700.700v5.600l-1.500.3-3.800 3.600c-.800.700-1.900.700-2.700 0L3.300 9.900zM5 5.700v3.500l5.700 3.300c.400.300.900.300 1.300 0l3-3 .100-3.600-2.200-.4-1.700.2-2.300 2.400c-.700.700-1.800.700-2.400 0-.600-.600-.600-1.500 0-2.100l.300-.300z"/></svg>我的推荐</span><span class="xb" style="width:22.500px;background:#55b99d;margin-left:4px"><svg class="ic" width="12" height="12" viewBox="0 0 16 16" style=""><path d="M11.400 1.200c.5-.5 1.200-.5 1.700 0l1.700 1.700c.5.500.5 1.200 0 1.700l-1.300 1.300-3.400-3.400zM9.300 3.300l3.400 3.400-7.500 7.500-4.200.8.800-4.200zM3 11.500l-.3 1.800 1.800-.3z"/></svg></span><span class="xb" style="width:22.500px;background:#d9594a;margin-left:3px"><svg class="ic" width="12" height="12" viewBox="0 0 16 16" style=""><path d="M5.500 1.200c.2-.5.500-.7 1-.7h3c.5 0 .8.200 1 .7l.4 1h3c.3 0 .5.200.5.500v.7c0 .3-.2.500-.5.500h-.7v9.300c0 1.200-.7 2-1.700 2H4.500c-1 0-1.700-.8-1.700-2V3.900h-.7c-.3 0-.5-.2-.5-.5v-.7c0-.3.200-.5.500-.5h3zM6.700 1.700l-.3.500h3.200l-.3-.5zM5.400 6v6.500h1.200V6zm2 0v6.500h1.200V6zm2 0v6.500h1.200V6z" fill-rule="evenodd"/></svg></span></td></tr>
<tr class="o"><td style="padding-left:3px">15755837458</td><td>普通用户</td><td>普通用户</td><td></td><td>15755837458</td><td><span class="av" style="background:#a8e0a8">1</span></td><td>1</td><td>0</td><td>2021-07-17 17:06:02</td><td><a>112.32.212.143</a></td><td>2021-07-17 17:04:24</td><td><a>112.32.212.143</a></td><td style="padding-right:.800px"><span class="st"><i></i>正常</span></td><td style="text-align:left;padding-left:8px"><span class="xb" style="width:79.200px;background:#4b96d8"><svg class="ic" width="17" height="13.6" viewBox="0 0 20 16" style="margin-right:2.500px"><path fill-rule="evenodd" d="M0 3.500h2.800v7H0zM17.200 3.500H20v7h-2.800zM3.300 4.200l2.600-.1 2-.9c.700-.3 1.500-.3 2.200 0l.9.400 2-.2 3.700.700v5.600l-1.500.3-3.800 3.600c-.800.700-1.900.700-2.700 0L3.300 9.900zM5 5.700v3.500l5.700 3.300c.400.300.900.300 1.300 0l3-3 .100-3.600-2.200-.4-1.700.2-2.300 2.400c-.700.700-1.800.700-2.400 0-.600-.600-.600-1.500 0-2.100l.300-.300z"/></svg>我的推荐</span><span class="xb" style="width:22.500px;background:#55b99d;margin-left:4px"><svg class="ic" width="12" height="12" viewBox="0 0 16 16" style=""><path d="M11.400 1.200c.5-.5 1.200-.5 1.700 0l1.700 1.700c.5.500.5 1.200 0 1.700l-1.300 1.300-3.400-3.400zM9.300 3.300l3.400 3.400-7.500 7.500-4.200.8.800-4.200zM3 11.500l-.3 1.800 1.800-.3z"/></svg></span><span class="xb" style="width:22.500px;background:#d9594a;margin-left:3px"><svg class="ic" width="12" height="12" viewBox="0 0 16 16" style=""><path d="M5.500 1.200c.2-.5.500-.7 1-.7h3c.5 0 .8.200 1 .7l.4 1h3c.3 0 .5.200.5.500v.7c0 .3-.2.500-.5.500h-.7v9.300c0 1.200-.7 2-1.700 2H4.500c-1 0-1.700-.8-1.700-2V3.900h-.7c-.3 0-.5-.2-.5-.5v-.7c0-.3.200-.5.500-.5h3zM6.700 1.700l-.3.500h3.200l-.3-.5zM5.400 6v6.500h1.200V6zm2 0v6.500h1.200V6zm2 0v6.500h1.200V6z" fill-rule="evenodd"/></svg></span></td></tr>
<tr class=""><td style="padding-left:3px">18883565773</td><td>普通用户</td><td>普通用户</td><td></td><td>18883565773</td><td><span class="av" style="background:#a8e0d2">1</span></td><td>1</td><td>0</td><td>2021-07-21 14:55:12</td><td><a>106.86.173.95</a></td><td>2021-07-16 17:25:11</td><td><a>106.86.174.119</a></td><td style="padding-right:.800px"><span class="st"><i></i>正常</span></td><td style="text-align:left;padding-left:8px"><span class="xb" style="width:79.200px;background:#4b96d8"><svg class="ic" width="17" height="13.6" viewBox="0 0 20 16" style="margin-right:2.500px"><path fill-rule="evenodd" d="M0 3.500h2.800v7H0zM17.200 3.500H20v7h-2.800zM3.300 4.200l2.600-.1 2-.9c.700-.3 1.500-.3 2.200 0l.9.400 2-.2 3.700.700v5.600l-1.500.3-3.800 3.600c-.800.700-1.900.700-2.700 0L3.300 9.900zM5 5.700v3.500l5.700 3.300c.400.300.900.300 1.300 0l3-3 .100-3.600-2.200-.4-1.700.2-2.300 2.400c-.700.700-1.800.700-2.400 0-.600-.600-.600-1.500 0-2.100l.300-.300z"/></svg>我的推荐</span><span class="xb" style="width:22.500px;background:#55b99d;margin-left:4px"><svg class="ic" width="12" height="12" viewBox="0 0 16 16" style=""><path d="M11.400 1.200c.5-.5 1.200-.5 1.700 0l1.700 1.700c.5.500.5 1.200 0 1.700l-1.300 1.300-3.400-3.400zM9.300 3.300l3.400 3.400-7.500 7.500-4.200.8.800-4.200zM3 11.500l-.3 1.800 1.800-.3z"/></svg></span><span class="xb" style="width:22.500px;background:#d9594a;margin-left:3px"><svg class="ic" width="12" height="12" viewBox="0 0 16 16" style=""><path d="M5.500 1.200c.2-.5.500-.7 1-.7h3c.5 0 .8.200 1 .7l.4 1h3c.3 0 .5.200.5.500v.7c0 .3-.2.500-.5.500h-.7v9.300c0 1.200-.7 2-1.700 2H4.500c-1 0-1.700-.8-1.700-2V3.900h-.7c-.3 0-.5-.2-.5-.5v-.7c0-.3.200-.5.500-.5h3zM6.700 1.700l-.3.500h3.200l-.3-.5zM5.400 6v6.500h1.200V6zm2 0v6.500h1.200V6zm2 0v6.500h1.200V6z" fill-rule="evenodd"/></svg></span></td></tr>
<tr class="o"><td style="padding-left:3px">18236816611</td><td>普通用户</td><td>普通用户</td><td></td><td>18236816611</td><td><span class="av" style="background:#a0a4e0">1</span></td><td>1</td><td>0</td><td>2021-07-16 16:52:46</td><td><a>223.90.214.208</a></td><td>2021-07-16 16:51:47</td><td><a>223.90.214.208</a></td><td style="padding-right:.800px"><span class="st"><i></i>正常</span></td><td style="text-align:left;padding-left:8px"><span class="xb" style="width:79.200px;background:#4b96d8"><svg class="ic" width="17" height="13.6" viewBox="0 0 20 16" style="margin-right:2.500px"><path fill-rule="evenodd" d="M0 3.500h2.800v7H0zM17.200 3.500H20v7h-2.800zM3.300 4.200l2.600-.1 2-.9c.700-.3 1.500-.3 2.200 0l.9.400 2-.2 3.700.700v5.600l-1.500.3-3.800 3.600c-.800.700-1.900.700-2.700 0L3.300 9.900zM5 5.700v3.500l5.700 3.300c.400.300.900.300 1.300 0l3-3 .100-3.600-2.200-.4-1.700.2-2.300 2.400c-.700.700-1.800.700-2.400 0-.600-.600-.600-1.500 0-2.100l.300-.300z"/></svg>我的推荐</span><span class="xb" style="width:22.500px;background:#55b99d;margin-left:4px"><svg class="ic" width="12" height="12" viewBox="0 0 16 16" style=""><path d="M11.400 1.200c.5-.5 1.200-.5 1.700 0l1.700 1.700c.5.500.5 1.200 0 1.700l-1.300 1.300-3.400-3.400zM9.300 3.300l3.400 3.400-7.500 7.500-4.200.8.800-4.200zM3 11.500l-.3 1.800 1.800-.3z"/></svg></span><span class="xb" style="width:22.500px;background:#d9594a;margin-left:3px"><svg class="ic" width="12" height="12" viewBox="0 0 16 16" style=""><path d="M5.500 1.200c.2-.5.500-.7 1-.7h3c.5 0 .8.200 1 .7l.4 1h3c.3 0 .5.200.5.500v.7c0 .3-.2.500-.5.500h-.7v9.300c0 1.200-.7 2-1.700 2H4.500c-1 0-1.700-.8-1.700-2V3.900h-.7c-.3 0-.5-.2-.5-.5v-.7c0-.3.200-.5.500-.5h3zM6.700 1.700l-.3.500h3.200l-.3-.5zM5.400 6v6.500h1.200V6zm2 0v6.500h1.200V6zm2 0v6.500h1.200V6z" fill-rule="evenodd"/></svg></span></td></tr>
<tr class=""><td style="padding-left:3px">13399881583</td><td>普通用户</td><td>县代</td><td></td><td>13399881583</td><td><span class="av" style="background:#d6a0e0">1</span></td><td>1</td><td>0</td><td>2021-07-15 15:54:23</td><td><a>113.251.234.239</a></td><td>2021-07-15 15:54:00</td><td><a>113.251.234.239</a></td><td style="padding-right:.800px"><span class="st"><i></i>正常</span></td><td style="text-align:left;padding-left:8px"><span class="xb" style="width:79.200px;background:#4b96d8"><svg class="ic" width="17" height="13.6" viewBox="0 0 20 16" style="margin-right:2.500px"><path fill-rule="evenodd" d="M0 3.500h2.800v7H0zM17.200 3.500H20v7h-2.800zM3.300 4.200l2.600-.1 2-.9c.700-.3 1.500-.3 2.200 0l.9.400 2-.2 3.700.700v5.600l-1.500.3-3.800 3.600c-.800.700-1.900.700-2.700 0L3.300 9.900zM5 5.700v3.500l5.700 3.300c.400.300.900.300 1.300 0l3-3 .100-3.600-2.200-.4-1.700.2-2.300 2.400c-.700.700-1.800.700-2.400 0-.600-.600-.600-1.500 0-2.100l.300-.300z"/></svg>我的推荐</span><span class="xb" style="width:22.500px;background:#55b99d;margin-left:4px"><svg class="ic" width="12" height="12" viewBox="0 0 16 16" style=""><path d="M11.400 1.200c.5-.5 1.200-.5 1.700 0l1.700 1.700c.5.500.5 1.200 0 1.700l-1.300 1.300-3.400-3.400zM9.300 3.300l3.400 3.400-7.500 7.500-4.200.8.800-4.200zM3 11.500l-.3 1.800 1.800-.3z"/></svg></span><span class="xb" style="width:22.500px;background:#d9594a;margin-left:3px"><svg class="ic" width="12" height="12" viewBox="0 0 16 16" style=""><path d="M5.500 1.200c.2-.5.500-.7 1-.7h3c.5 0 .8.200 1 .7l.4 1h3c.3 0 .5.200.5.500v.7c0 .3-.2.500-.5.500h-.7v9.300c0 1.200-.7 2-1.700 2H4.500c-1 0-1.700-.8-1.700-2V3.900h-.7c-.3 0-.5-.2-.5-.5v-.7c0-.3.200-.5.500-.5h3zM6.700 1.700l-.3.500h3.200l-.3-.5zM5.400 6v6.500h1.200V6zm2 0v6.500h1.200V6zm2 0v6.500h1.200V6z" fill-rule="evenodd"/></svg></span></td></tr>
<tr class="o"><td style="padding-left:3px">19923252773</td><td>普通用户</td><td>县代</td><td></td><td>19923252773</td><td><span class="av" style="background:#a4cae6">1</span></td><td>1</td><td>0</td><td>2021-07-20 17:54:22</td><td><a>106.84.190.243</a></td><td>2021-07-15 15:52:10</td><td><a>113.251.234.239</a></td><td style="padding-right:.800px"><span class="st"><i></i>正常</span></td><td style="text-align:left;padding-left:8px"><span class="xb" style="width:79.200px;background:#4b96d8"><svg class="ic" width="17" height="13.6" viewBox="0 0 20 16" style="margin-right:2.500px"><path fill-rule="evenodd" d="M0 3.500h2.800v7H0zM17.200 3.500H20v7h-2.800zM3.300 4.200l2.600-.1 2-.9c.700-.3 1.500-.3 2.200 0l.9.400 2-.2 3.700.700v5.600l-1.500.3-3.800 3.600c-.800.700-1.900.700-2.700 0L3.300 9.900zM5 5.700v3.500l5.700 3.300c.400.300.900.300 1.300 0l3-3 .100-3.600-2.200-.4-1.700.2-2.300 2.400c-.700.700-1.800.700-2.400 0-.600-.600-.600-1.500 0-2.100l.300-.300z"/></svg>我的推荐</span><span class="xb" style="width:22.500px;background:#55b99d;margin-left:4px"><svg class="ic" width="12" height="12" viewBox="0 0 16 16" style=""><path d="M11.400 1.200c.5-.5 1.200-.5 1.700 0l1.700 1.700c.5.500.5 1.200 0 1.700l-1.300 1.300-3.400-3.400zM9.300 3.300l3.400 3.400-7.500 7.500-4.200.8.800-4.200zM3 11.500l-.3 1.800 1.800-.3z"/></svg></span><span class="xb" style="width:22.500px;background:#d9594a;margin-left:3px"><svg class="ic" width="12" height="12" viewBox="0 0 16 16" style=""><path d="M5.500 1.200c.2-.5.500-.7 1-.7h3c.5 0 .8.200 1 .7l.4 1h3c.3 0 .5.200.5.500v.7c0 .3-.2.500-.5.500h-.7v9.300c0 1.200-.7 2-1.700 2H4.500c-1 0-1.700-.8-1.700-2V3.900h-.7c-.3 0-.5-.2-.5-.5v-.7c0-.3.200-.5.500-.5h3zM6.700 1.700l-.3.500h3.200l-.3-.5zM5.400 6v6.500h1.200V6zm2 0v6.500h1.200V6zm2 0v6.500h1.200V6z" fill-rule="evenodd"/></svg></span></td></tr>
<tr class=""><td style="padding-left:3px">13865125836</td><td>普通用户</td><td>普通用户</td><td></td><td>13865125836</td><td><span class="av" style="background:#a8e0a8">1</span></td><td>1</td><td>0</td><td>2021-07-15 15:31:02</td><td><a>39.144.38.165</a></td><td>2021-07-15 15:28:44</td><td><a>39.144.38.165</a></td><td style="padding-right:.800px"><span class="st"><i></i>正常</span></td><td style="text-align:left;padding-left:8px"><span class="xb" style="width:79.200px;background:#4b96d8"><svg class="ic" width="17" height="13.6" viewBox="0 0 20 16" style="margin-right:2.500px"><path fill-rule="evenodd" d="M0 3.500h2.800v7H0zM17.200 3.500H20v7h-2.800zM3.300 4.200l2.600-.1 2-.9c.700-.3 1.500-.3 2.200 0l.9.400 2-.2 3.700.700v5.600l-1.500.3-3.800 3.600c-.800.700-1.900.700-2.700 0L3.300 9.900zM5 5.700v3.500l5.700 3.300c.400.300.900.300 1.300 0l3-3 .100-3.600-2.200-.4-1.700.2-2.300 2.400c-.700.700-1.800.700-2.400 0-.600-.600-.600-1.500 0-2.100l.300-.300z"/></svg>我的推荐</span><span class="xb" style="width:22.500px;background:#55b99d;margin-left:4px"><svg class="ic" width="12" height="12" viewBox="0 0 16 16" style=""><path d="M11.400 1.200c.5-.5 1.200-.5 1.700 0l1.700 1.700c.5.500.5 1.200 0 1.700l-1.300 1.300-3.400-3.400zM9.300 3.300l3.400 3.400-7.500 7.500-4.200.8.800-4.200zM3 11.500l-.3 1.800 1.800-.3z"/></svg></span><span class="xb" style="width:22.500px;background:#d9594a;margin-left:3px"><svg class="ic" width="12" height="12" viewBox="0 0 16 16" style=""><path d="M5.500 1.200c.2-.5.500-.7 1-.7h3c.5 0 .8.200 1 .7l.4 1h3c.3 0 .5.200.5.500v.7c0 .3-.2.500-.5.500h-.7v9.300c0 1.200-.7 2-1.700 2H4.500c-1 0-1.700-.8-1.700-2V3.900h-.7c-.3 0-.5-.2-.5-.5v-.7c0-.3.200-.5.500-.5h3zM6.700 1.700l-.3.500h3.200l-.3-.5zM5.400 6v6.500h1.200V6zm2 0v6.500h1.200V6zm2 0v6.500h1.200V6z" fill-rule="evenodd"/></svg></span></td></tr>
</tbody></table>
<div class="abs" style="left:0;top:43px;width:3.500px;height:475px;background:#fbfbfb"></div>
<div id="sb"><div class="th"></div><span class="abs" style="left:7px;top:4.300px;border:4.500px solid transparent;border-right:5.500px solid #505050;border-left:0;height:0;width:0"></span><span class="abs" style="right:6px;top:4.300px;border:4.500px solid transparent;border-left:5.500px solid #505050;border-right:0;height:0;width:0"></span></div>
</div>
<svg class="abs" style="left:1270px;top:320px;overflow:visible" width="230" height="40"><text x="4.600" y="31.800" font-family="DejaVu Sans, sans-serif" font-weight="bold" font-size="26.500" fill="#800000" textLength="217.500" lengthAdjust="spacingAndGlyphs">WPWaterMark</text></svg>
<div id="info">显示第 1 到第 10 条记录，总共 86 条记录 每页显示<span style="display:inline-block;width:50.200px;height:31.500px;border:1px solid #ddd;border-radius:3px;background:#f4f4f4;margin:0 5.300px 0 4.400px;text-align:center;vertical-align:top;font-size:12px;color:#444;position:relative;top:.100px;word-spacing:0">10<span style="display:inline-block;border:3.500px solid transparent;border-bottom:4px solid #444;border-top:0;margin-left:3px;vertical-align:middle;position:relative;top:-1px"></span></span>条记录</div>
<div class="pg " style="left:1031.6px;width:66.3px;border-radius:3px 0 0 3px;">上一页</div>
<div class="pg on" style="left:1096.9px;width:34.6px;">1</div>
<div class="pg " style="left:1130.5px;width:33.3px;">2</div>
<div class="pg " style="left:1162.8px;width:33.2px;">3</div>
<div class="pg " style="left:1195px;width:33.7px;">4</div>
<div class="pg " style="left:1227.7px;width:33.8px;">5</div>
<div class="pg " style="left:1260.5px;width:37.1px;color:#aaa;">...</div>
<div class="pg " style="left:1296.6px;width:34.5px;">9</div>
<div class="pg " style="left:1330.1px;width:65.5px;border-radius:0 3px 3px 0;">下一页</div>
<div class="pg" style="left:1399.900px;width:51px;border-radius:3px;margin-left:0"></div>
<div class="pg" style="left:1456.500px;width:49.200px;border-radius:3px;margin-left:0;background:#f4f4f4;font-size:12px;color:#444">跳转</div>
</div></div></div></body></html>
